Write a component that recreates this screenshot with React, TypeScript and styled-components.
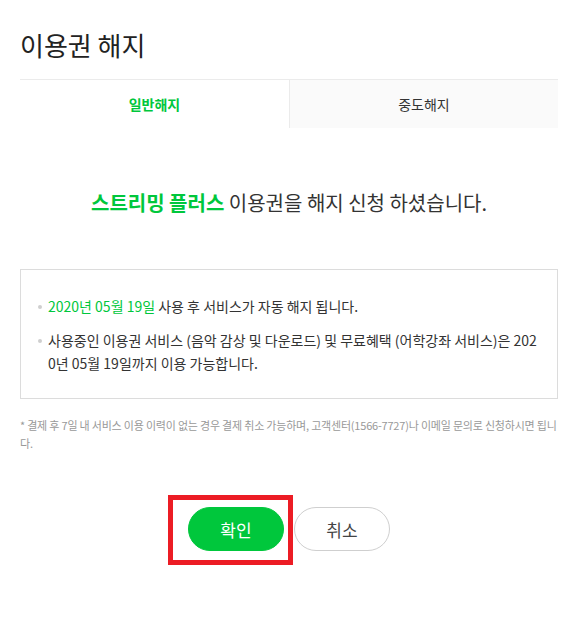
import React from 'react';
import styled, { createGlobalStyle } from 'styled-components';

const GlobalStyle = createGlobalStyle`
  html, body {
    margin: 0;
    padding: 0;
    background: #fff;
  }
  body {
    font-family: "Noto Sans CJK KR", "Noto Sans", "Liberation Sans", sans-serif;
    color: #333;
  }
  * {
    box-sizing: border-box;
  }
`;

const green = '#00c73c';

const Page = styled.div`
  width: 571px;
  padding: 0 13px 60px 20px;
`;

const Title = styled.h2`
  margin: 0;
  padding-top: 29px;
  height: 79px;
  font-size: 26px;
  line-height: 32px;
  font-weight: 400;
  color: #222;
`;

const Tabs = styled.div`
  display: grid;
  grid-template-columns: 1fr 1fr;
  border-top: 1px solid #ebebeb;
`;

const Tab = styled.div<{ $active?: boolean }>`
  height: 48px;
  display: flex;
  align-items: center;
  justify-content: center;
  font-size: 14px;
  font-weight: ${(p) => (p.$active ? 700 : 400)};
  color: ${(p) => (p.$active ? green : '#333')};
  background: ${(p) => (p.$active ? '#fff' : '#fafafa')};
  border-left: ${(p) => (p.$active ? 'none' : '1px solid #ebebeb')};
`;

const Message = styled.p`
  margin: 62px 0 0;
  text-align: center;
  font-size: 20px;
  line-height: 26px;
  color: #333;
`;

const Highlight = styled.strong`
  color: ${green};
  font-weight: 700;
`;

const InfoBox = styled.ul`
  list-style: none;
  margin: 53px 0 0;
  padding: 25px 14px 23px 17px;
  border: 1px solid #dcdcdc;
`;

const InfoItem = styled.li`
  position: relative;
  padding-left: 10px;
  font-size: 14px;
  line-height: 23px;
  color: #333;
  word-break: break-all;

  & + & {
    margin-top: 11px;
  }

  &::before {
    content: '';
    position: absolute;
    left: 0;
    top: 10px;
    width: 4px;
    height: 4px;
    border-radius: 50%;
    background: #cfcfcf;
  }
`;

const Date = styled.span`
  color: ${green};
`;

const Note = styled.p`
  margin: 17px 0 0;
  font-size: 11px;
  line-height: 18px;
  color: #999;
  word-break: break-all;
  letter-spacing: -0.2px;
`;

const Buttons = styled.div`
  display: flex;
  justify-content: center;
  gap: 10px;
  margin-top: 55px;
`;

const ButtonWrap = styled.span`
  position: relative;
  display: inline-flex;
`;

const Marker = styled.span`
  position: absolute;
  left: -20px;
  top: -12px;
  width: 125px;
  height: 70px;
  border: 5px solid #ec1c24;
  pointer-events: none;
`;

const Button = styled.button<{ $primary?: boolean }>`
  width: 96px;
  height: 44px;
  border-radius: 22px;
  font-family: inherit;
  font-size: 17px;
  cursor: pointer;
  color: ${(p) => (p.$primary ? '#fff' : '#444')};
  background: ${(p) => (p.$primary ? green : '#fff')};
  border: 1px solid ${(p) => (p.$primary ? green : '#cfcfcf')};
`;

const App: React.FC = () => {
  return (
    <Page>
      <GlobalStyle />
      <Title>이용권 해지</Title>
      <Tabs>
        <Tab $active>일반해지</Tab>
        <Tab>중도해지</Tab>
      </Tabs>

      <Message>
        <Highlight>스트리밍 플러스</Highlight> 이용권을 해지 신청 하셨습니다.
      </Message>

      <InfoBox>
        <InfoItem>
          <Date>2020년 05월 19일</Date> 사용 후 서비스가 자동 해지 됩니다.
        </InfoItem>
        <InfoItem>
          사용중인 이용권 서비스 (음악 감상 및 다운로드) 및 무료혜택 (어학강좌 서비스)은 2020년 05월 19일까지 이용 가능합니다.
        </InfoItem>
      </InfoBox>

      <Note>
        * 결제 후 7일 내 서비스 이용 이력이 없는 경우 결제 취소 가능하며, 고객센터(1566-7727)나 이메일 문의로 신청하시면 됩니다.
      </Note>

      <Buttons>
        <ButtonWrap>
          <Button $primary>확인</Button>
          <Marker />
        </ButtonWrap>
        <Button>취소</Button>
      </Buttons>
    </Page>
  );
};

export default App;
